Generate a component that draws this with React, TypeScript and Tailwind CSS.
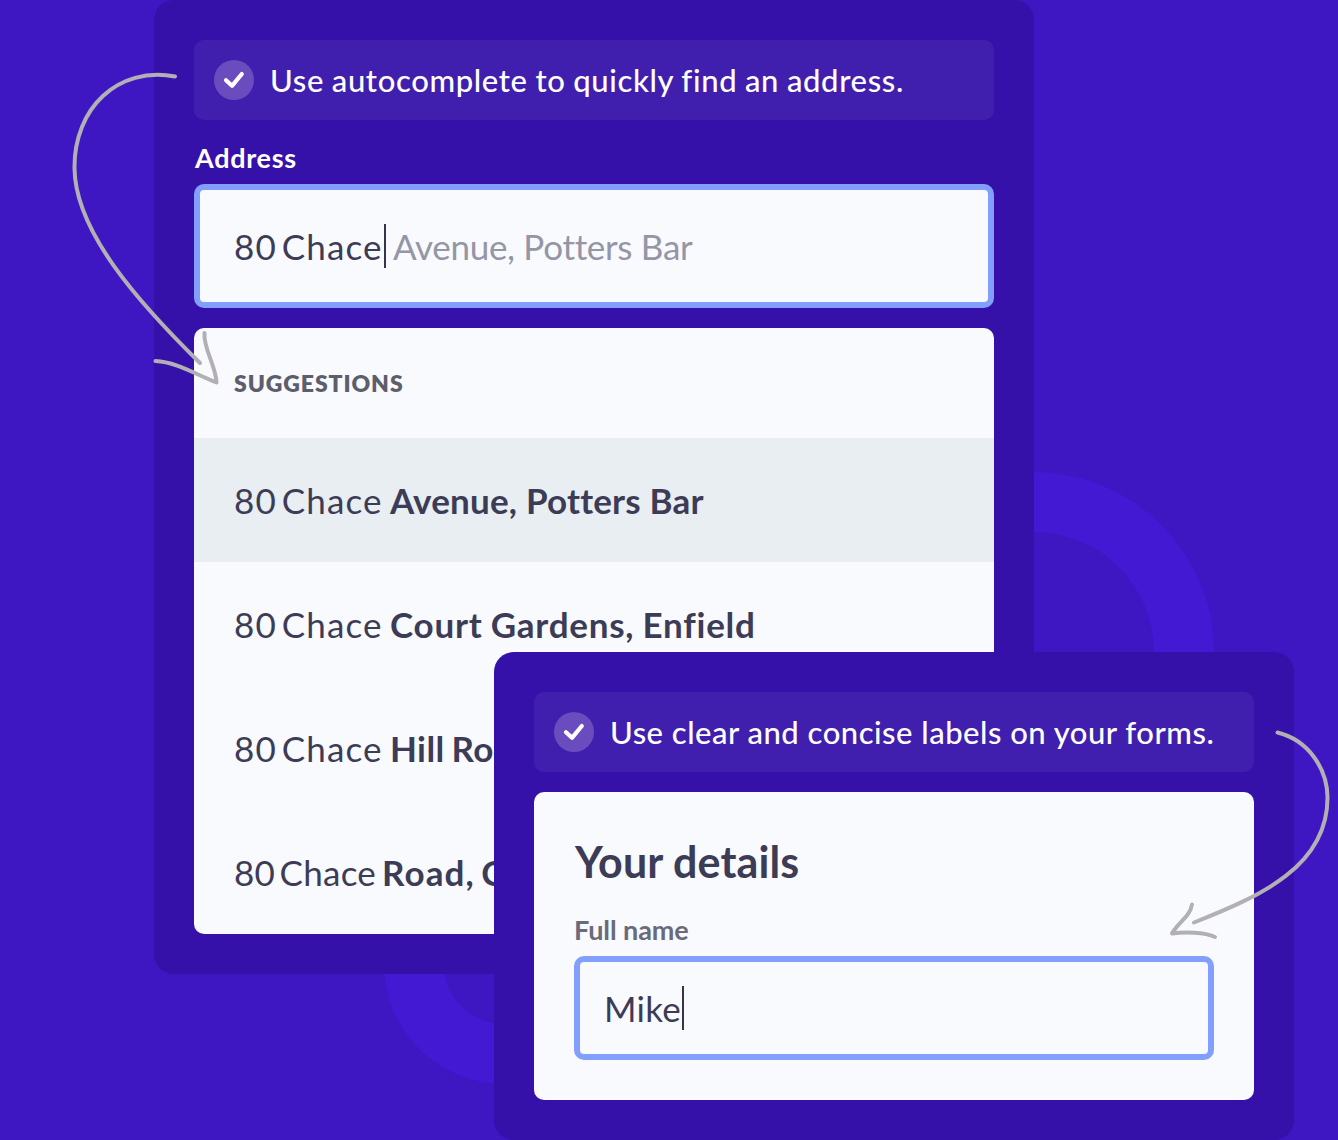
import type { ReactNode } from "react";

function Tip({ children }: { children: ReactNode }) {
  return (
    <div className="flex h-20 items-center gap-4 rounded-[10px] bg-[#411fae] px-5">
      <span className="flex size-10 shrink-0 items-center justify-center rounded-full bg-[#6a4cbf]">
        <svg viewBox="0 0 40 40" className="size-10" fill="none">
          <path
            d="M12 20.2 L18 25.8 L27.8 14"
            stroke="#fff"
            strokeWidth="4.2"
            strokeLinecap="round"
            strokeLinejoin="round"
          />
        </svg>
      </span>
      {children}
    </div>
  );
}

function Caret() {
  return <span className="h-11 w-0.5 shrink-0 bg-[#34344f]" />;
}

function Suggestion({ children, active = false }: { children: ReactNode; active?: boolean }) {
  return (
    <li
      className={
        active
          ? "flex h-[124px] items-center bg-[#e8eef2] px-10"
          : "flex h-[124px] items-center px-10"
      }
    >
      {children}
    </li>
  );
}

const typed = "w-[156px] shrink-0 tracking-[1.1px] [word-spacing:-5px]";

function AddressCard() {
  return (
    <section className="ml-[154px] h-[974px] w-[880px] rounded-[20px] bg-[#3611a9] p-10">
      <Tip>
        <p className="text-[31px] font-medium tracking-[0.65px] [word-spacing:-0.7px] whitespace-nowrap text-white">
          Use autocomplete to quickly find an address.
        </p>
      </Tip>
      <div className="flex h-16 items-end pb-2.5 pl-px text-[27px] leading-8 font-bold tracking-[0.7px] text-white">
        Address
      </div>
      <div className="flex h-[124px] items-center rounded-[10px] border-[6px] border-[#829ffe] bg-[#f8fafe] pl-[34px] text-[35px] leading-[42px] text-[#3d3c56]">
        <span className="w-[150px] tracking-[1.1px] [word-spacing:-5px]">80 Chace</span>
        <Caret />
        <span className="ml-[7px] tracking-[-0.3px] text-[#9496a6]">Avenue, Potters Bar</span>
      </div>
      <div className="mt-5 overflow-hidden rounded-[10px] bg-[#f8fafe]">
        <div className="flex h-[110px] items-center px-10 text-[23px] font-extrabold tracking-[0.9px] text-[#5d5d6c]">
          SUGGESTIONS
        </div>
        <ul className="text-[35px] leading-[42px] whitespace-nowrap text-[#3d3c56]">
          <Suggestion active>
            <span className={typed}>80 Chace</span>
            <b className="tracking-[0.2px]">Avenue, Potters Bar</b>
          </Suggestion>
          <Suggestion>
            <span className={typed}>80 Chace</span>
            <b className="tracking-[0.75px] [word-spacing:-1px]">Court Gardens, Enfield</b>
          </Suggestion>
          <Suggestion>
            <span className={typed}>80 Chace</span>
            <b className="tracking-[0.4px] [word-spacing:-2px]">Hill Road</b>
          </Suggestion>
          <Suggestion>
            <span className="w-[148px] shrink-0 tracking-[0.3px] [word-spacing:-5px]">80 Chace</span>
            <b className="tracking-[1.1px] [word-spacing:-3px]">Road, C</b>
          </Suggestion>
        </ul>
      </div>
    </section>
  );
}

function DetailsCard() {
  return (
    <section className="absolute top-[652px] left-[494px] w-[800px] rounded-[20px] bg-[#3611a9] p-10">
      <Tip>
        <p className="text-[31px] font-medium tracking-[0.5px] whitespace-nowrap text-white">
          Use clear and concise labels on your forms.
        </p>
      </Tip>
      <div className="mt-5 rounded-[10px] bg-[#f8fafe] px-10 pt-[46px] pb-10">
        <h2 className="pl-px text-[43px] leading-[48px] font-bold tracking-[0.1px] text-[#3d3c56]">
          Your details
        </h2>
        <div className="mt-7 text-[27px] leading-8 font-bold tracking-[-0.1px] text-[#6a6a7c]">
          Full name
        </div>
        <div className="mt-2.5 flex h-[104px] items-center rounded-[10px] border-[6px] border-[#829ffe] pl-6 text-[35px] leading-[42px] text-[#3d3c56]">
          <span className="w-[78px] tracking-[0.3px]">Mike</span>
          <Caret />
        </div>
      </div>
    </section>
  );
}

function Arrows() {
  return (
    <svg
      viewBox="0 0 1338 1140"
      className="pointer-events-none absolute inset-0 h-[1140px] w-[1338px]"
      fill="none"
      stroke="#b2b0b4"
      strokeWidth="4"
      strokeLinecap="round"
      strokeLinejoin="round"
    >
      <path d="M175 76.5 C118 66 74 108 74.5 168 C75 232 140 304 200 363" />
      <path d="M155.5 361 C176 362 195 374 216.5 382.5 C216 366 203 348 204.5 333" />
      <path d="M1277.5 732.5 C1308 740 1327 768 1327.5 797 C1328 866 1261 896 1194 922.5" />
      <path d="M1192 904.5 C1190 917 1178 922 1172 933.5 C1185 932 1204 932 1215 937" />
    </svg>
  );
}

export default function App() {
  return (
    <main className="relative h-[1140px] w-[1338px] overflow-hidden bg-[#3e17c2] font-['Lato',sans-serif]">
      <div className="absolute top-[472px] left-[854px] size-[360px] rounded-full border-[60px] border-[#4419d4]" />
      <div className="absolute top-[844px] left-[384px] size-[240px] rounded-full border-[60px] border-[#4419d4]" />
      <div className="relative">
        <AddressCard />
      </div>
      <DetailsCard />
      <Arrows />
    </main>
  );
}
